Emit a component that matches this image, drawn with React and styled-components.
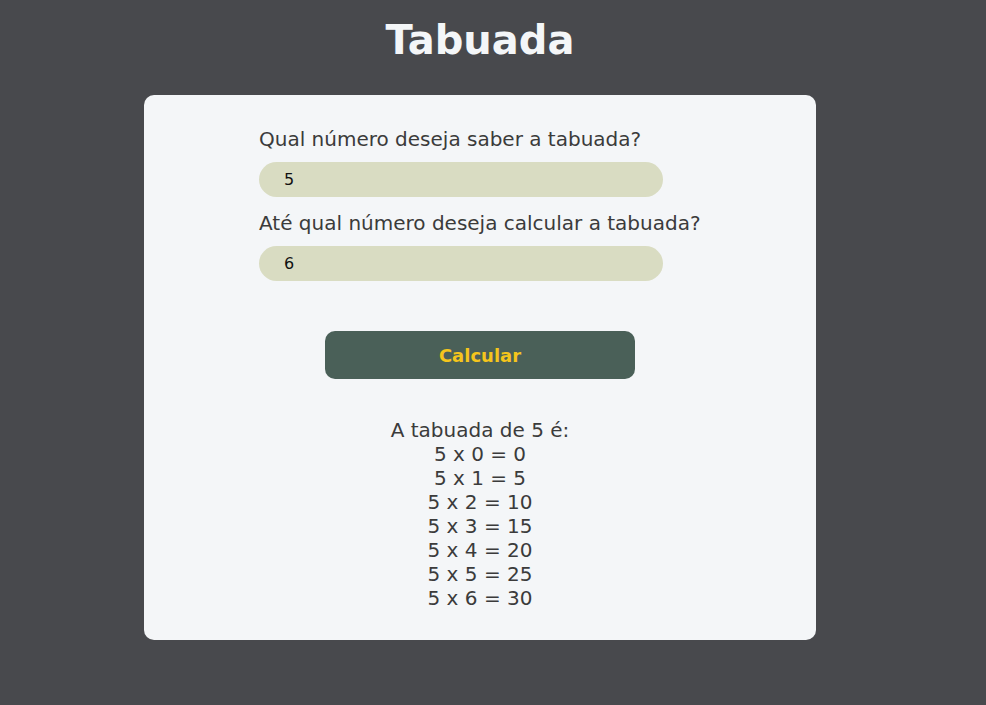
import React, { useState } from "react";
import styled, { createGlobalStyle } from "styled-components";

const GlobalStyle = createGlobalStyle`
  html, body {
    margin: 0;
    background-color: #48494d;
    font-family: "DejaVu Sans", Verdana, sans-serif;
  }
`;

const Page = styled.main`
  width: 960px;
  padding-bottom: 65px;
`;

const Title = styled.h1`
  margin: 17px 0 32px;
  text-align: center;
  font-size: 40px;
  font-weight: bold;
  line-height: normal;
  color: #f4f6f8;
`;

const Card = styled.section`
  width: 672px;
  margin: 0 auto;
  box-sizing: border-box;
  padding: 32px 0 30px;
  background-color: #f4f6f8;
  border-radius: 10px;
  display: flex;
  flex-direction: column;
  align-items: center;
`;

const Form = styled.div`
  width: 442px;
  display: flex;
  flex-direction: column;
  align-items: flex-start;
`;

const Label = styled.label`
  font-size: 20px;
  line-height: normal;
  color: #3b3b3b;
  margin-bottom: 11px;
`;

const Input = styled.input`
  width: 404px;
  height: 35px;
  box-sizing: border-box;
  border: none;
  outline: none;
  border-radius: 18px;
  padding: 0 0 0 25px;
  background-color: #d9dcc2;
  font-family: "DejaVu Sans", Verdana, sans-serif;
  font-size: 16px;
  color: #111;
  margin-bottom: ${(p) => (p.$last ? "50px" : "14px")};
`;

const Button = styled.button`
  width: 310px;
  height: 48px;
  border: none;
  border-radius: 10px;
  background-color: #4a6058;
  color: #f5c51c;
  font-family: "DejaVu Sans", Verdana, sans-serif;
  font-size: 18px;
  font-weight: bold;
  cursor: pointer;
`;

const Result = styled.div`
  margin-top: 39px;
  text-align: center;
  font-size: 20px;
  line-height: 24px;
  color: #3b3b3b;
`;

export default function App() {
  const [numero, setNumero] = useState("5");
  const [limite, setLimite] = useState("6");
  const [tabela, setTabela] = useState({ n: 5, max: 6 });

  const calcular = () => {
    setTabela({ n: Number(numero) || 0, max: Number(limite) || 0 });
  };

  const linhas = [];
  for (let i = 0; i <= tabela.max; i++) {
    linhas.push(`${tabela.n} x ${i} = ${tabela.n * i}`);
  }

  return (
    <Page>
      <GlobalStyle />
      <Title>Tabuada</Title>
      <Card>
        <Form>
          <Label htmlFor="numero">Qual número deseja saber a tabuada?</Label>
          <Input id="numero" value={numero} onChange={(e) => setNumero(e.target.value)} />
          <Label htmlFor="limite">Até qual número deseja calcular a tabuada?</Label>
          <Input id="limite" $last value={limite} onChange={(e) => setLimite(e.target.value)} />
        </Form>
        <Button onClick={calcular}>Calcular</Button>
        <Result>
          <div>A tabuada de {tabela.n} é:</div>
          {linhas.map((l) => (
            <div key={l}>{l}</div>
          ))}
        </Result>
      </Card>
    </Page>
  );
}
